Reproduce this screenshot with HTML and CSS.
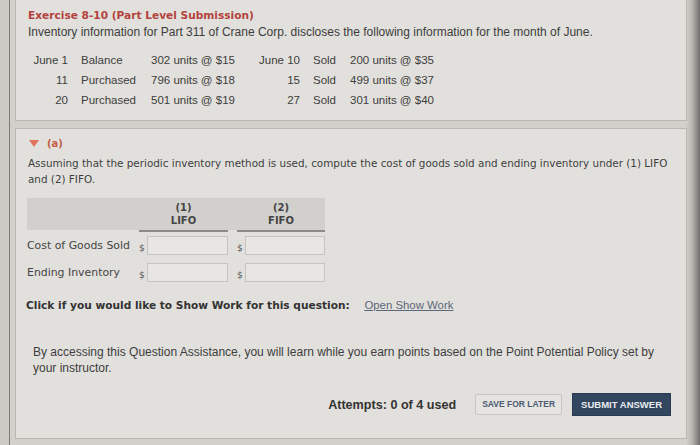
FILE: index.html
```html
<!DOCTYPE html>
<html>
<head>
<meta charset="utf-8">
<link rel="stylesheet" href="styles.css">
</head>
<body>
<div class="screen">
  <div class="rail"></div>
  <div class="content">
    <section class="panel panel-top">
      <h1 class="title">Exercise 8-10 (Part Level Submission)</h1>
      <p class="intro">Inventory information for Part 311 of Crane Corp. discloses the following information for the month of June.</p>
      <div class="data">
        <span class="r">June 1</span><span>Balance</span><span>302 units @ $15</span><span class="r">June 10</span><span>Sold</span><span>200 units @ $35</span>
        <span class="r">11</span><span>Purchased</span><span>796 units @ $18</span><span class="r">15</span><span>Sold</span><span>499 units @ $37</span>
        <span class="r">20</span><span>Purchased</span><span>501 units @ $19</span><span class="r">27</span><span>Sold</span><span>301 units @ $40</span>
      </div>
    </section>
    <section class="panel panel-main">
      <div class="part"><span class="tri"></span><span class="part-label">(a)</span></div>
      <p class="question">Assuming that the periodic inventory method is used, compute the cost of goods sold and ending inventory under (1) LIFO and (2) FIFO.</p>
      <div class="grid">
        <div class="head-blank"></div>
        <div class="head-col">(1)<br>LIFO</div>
        <div class="head-col">(2)<br>FIFO</div>
        <div class="row-label">Cost of Goods Sold</div>
        <div class="cell"><span class="cur">$</span><span class="box"></span></div>
        <div class="cell"><span class="cur">$</span><span class="box"></span></div>
        <div class="row-label">Ending Inventory</div>
        <div class="cell"><span class="cur">$</span><span class="box"></span></div>
        <div class="cell"><span class="cur">$</span><span class="box"></span></div>
      </div>
      <p class="showwork">Click if you would like to Show Work for this question: <a class="link">Open Show Work</a></p>
      <p class="assist">By accessing this Question Assistance, you will learn while you earn points based on the Point Potential Policy set by your instructor.</p>
      <div class="actions">
        <span class="attempts">Attempts: 0 of 4 used</span>
        <span class="btn btn-save">SAVE FOR LATER</span>
        <span class="btn btn-submit">SUBMIT ANSWER</span>
      </div>
    </section>
  </div>
  <div class="edge"></div>
</div>
</body>
</html>
```
FILE: styles.css
```css
html, body {
  margin: 0;
  padding: 0;
}
body {
  background: #d3d0cc;
  width: 700px;
  height: 445px;
  overflow: hidden;
  font-family: "DejaVu Sans", sans-serif;
  color: #3a3a3a;
}
.screen {
  display: flex;
  height: 445px;
}
.rail {
  width: 9px;
  background: #cdc9c5;
  border-right: 1px solid #7d7a77;
  flex: none;
}
.content {
  flex: none;
  width: 672px;
  padding-left: 5px;
  display: flex;
  flex-direction: column;
  gap: 7px;
}
.edge {
  flex: 1;
  background: linear-gradient(90deg, #cfcbc7 0, #b9b5b1 40%, #6e6b69 100%);
}
.panel {
  background: #e2e0dc;
  border: 1px solid #bab7b3;
  box-sizing: border-box;
}
.panel-top {
  height: 121px;
  border-top: none;
  padding: 8px 12px 0 12px;
}
.title {
  margin: 0;
  font-size: 10.6px;
  font-weight: bold;
  color: #b3433d;
  line-height: 14px;
}
.intro {
  margin: 3px 0 0;
  font-family: "Liberation Sans", sans-serif;
  font-size: 12px;
  line-height: 14px;
  color: #3d3d3d;
}
.data {
  margin-top: 14px;
  display: grid;
  grid-template-columns: 38px 70px 103px 59px 37px auto;
  row-gap: 6px;
  font-family: "Liberation Sans Narrow", "Liberation Sans", sans-serif;
  font-size: 11.5px;
  line-height: 14px;
  color: #3d3d3d;
  margin-left: 2px;
}
.data span { padding-left: 13px; white-space: nowrap; }
.data span.r { text-align: right; padding-left: 0; }
.panel-main {
  height: 311px;
  padding: 7px 5px 0 12px;
}
.part {
  display: flex;
  align-items: center;
  gap: 8px;
  height: 14px;
  margin-left: 1px;
}
.tri {
  width: 0;
  height: 0;
  border-left: 5px solid transparent;
  border-right: 5px solid transparent;
  border-top: 7px solid #e0735a;
}
.part-label {
  font-size: 10px;
  font-weight: bold;
  color: #c25a48;
}
.question {
  margin: 5px 0 0;
  font-size: 10.4px;
  line-height: 16px;
  color: #404040;
}
.grid {
  margin-top: 11px;
  display: grid;
  grid-template-columns: 103px 89px 88px;
  grid-template-rows: 34px 26px 28px;
  column-gap: 9px;
  align-items: center;
  width: 298px;
  margin-left: -1px;
  background: linear-gradient(#d2d0cd, #d2d0cd) top left / 100% 32px no-repeat;
}
.head-blank {
  align-self: stretch;
}
.head-col {
  align-self: stretch;
  text-align: center;
  font-size: 10px;
  font-weight: bold;
  line-height: 13px;
  padding-top: 3px;
  color: #444;
  border-bottom: 2px solid #8d8b89;
  box-sizing: border-box;
}
.row-label {
  font-size: 10.9px;
  color: #454545;
  white-space: nowrap;
}
.cell {
  display: flex;
  align-items: center;
  gap: 3px;
}
.cur {
  font-size: 9px;
  color: #555;
  padding-top: 5px;
  width: 5px;
}
.box {
  display: block;
  flex: 1;
  height: 19px;
  border: 1px solid #c6c4c1;
  background: #e8e6e3;
  box-sizing: border-box;
}
.showwork {
  margin: 12px 0 0 -2px;
  font-size: 10.6px;
  line-height: 14px;
  font-weight: bold;
  color: #333;
  white-space: nowrap;
}
.link {
  font-weight: normal;
  color: #5b6779;
  text-decoration: underline;
  margin-left: 11px;
  font-family: "Liberation Sans", sans-serif;
  font-size: 11.4px;
}
.assist {
  margin: 32px 0 0 5px;
  font-family: "Liberation Sans", sans-serif;
  font-size: 12px;
  line-height: 16px;
  color: #3d3d3d;
  width: 630px;
}
.actions {
  margin-top: 17px;
  display: flex;
  justify-content: flex-end;
  align-items: center;
  padding-right: 10px;
}
.attempts {
  font-family: "Liberation Sans", sans-serif;
  font-weight: bold;
  font-size: 12.6px;
  color: #333;
  margin-right: 19px;
}
.btn {
  font-family: "Liberation Sans", sans-serif;
  font-weight: bold;
  box-sizing: border-box;
}
.btn-save {
  font-size: 8.5px;
  height: 21px;
  line-height: 19px;
  padding: 0 6px;
  background: #e6e4e1;
  border: 1px solid #c7c5c2;
  color: #4d5b73;
  border-radius: 2px;
}
.btn-submit {
  margin-left: 10px;
  font-size: 9.5px;
  height: 23px;
  line-height: 21px;
  padding: 0 8px;
  background: #33465f;
  color: #e8ebef;
  border: 1px solid #2a3a50;
}
```
